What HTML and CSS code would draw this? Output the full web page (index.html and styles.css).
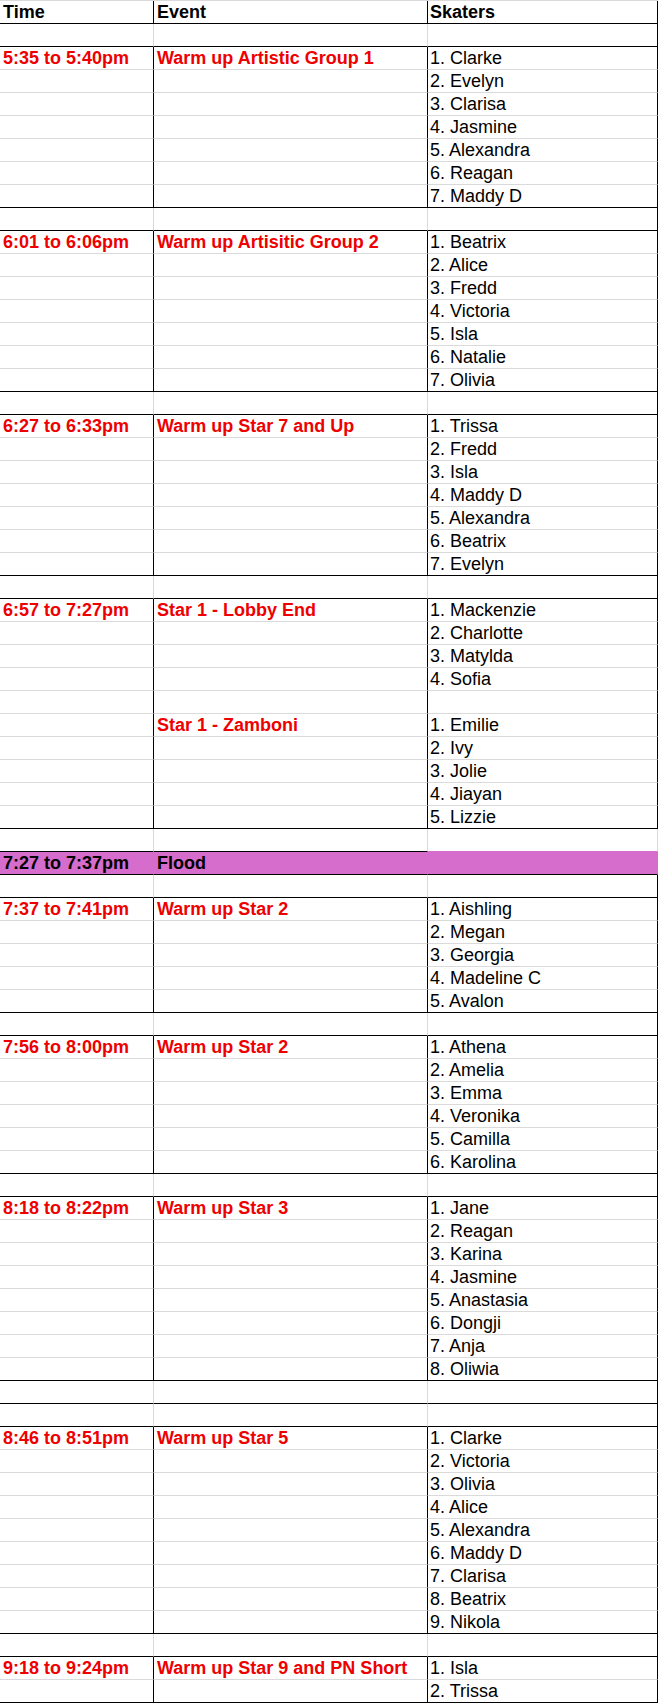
FILE: index.html
```html
<!DOCTYPE html>
<html>
<head>
<meta charset="utf-8">
<link rel="stylesheet" href="styles.css">
</head>
<body>
<div class="sheet">
  <div class="row hd"><div class="c">Time</div><div class="c">Event</div><div class="c">Skaters</div></div>
  <div class="row gap"><div class="c"></div><div class="c"></div><div class="c"></div></div>

  <div class="row grp"><div class="c t">5:35 to 5:40pm</div><div class="c e">Warm up Artistic Group 1</div><div class="c">1. Clarke</div></div>
  <div class="row grp"><div class="c"></div><div class="c"></div><div class="c">2. Evelyn</div></div>
  <div class="row grp"><div class="c"></div><div class="c"></div><div class="c">3. Clarisa</div></div>
  <div class="row grp"><div class="c"></div><div class="c"></div><div class="c">4. Jasmine</div></div>
  <div class="row grp"><div class="c"></div><div class="c"></div><div class="c">5. Alexandra</div></div>
  <div class="row grp"><div class="c"></div><div class="c"></div><div class="c">6. Reagan</div></div>
  <div class="row grp last"><div class="c"></div><div class="c"></div><div class="c">7. Maddy D</div></div>
  <div class="row gap"><div class="c"></div><div class="c"></div><div class="c"></div></div>

  <div class="row grp"><div class="c t">6:01 to 6:06pm</div><div class="c e">Warm up Artisitic Group 2</div><div class="c">1. Beatrix</div></div>
  <div class="row grp"><div class="c"></div><div class="c"></div><div class="c">2. Alice</div></div>
  <div class="row grp"><div class="c"></div><div class="c"></div><div class="c">3. Fredd</div></div>
  <div class="row grp"><div class="c"></div><div class="c"></div><div class="c">4. Victoria</div></div>
  <div class="row grp"><div class="c"></div><div class="c"></div><div class="c">5. Isla</div></div>
  <div class="row grp"><div class="c"></div><div class="c"></div><div class="c">6. Natalie</div></div>
  <div class="row grp last"><div class="c"></div><div class="c"></div><div class="c">7. Olivia</div></div>
  <div class="row gap"><div class="c"></div><div class="c"></div><div class="c"></div></div>

  <div class="row grp"><div class="c t">6:27 to 6:33pm</div><div class="c e">Warm up Star 7 and Up</div><div class="c">1. Trissa</div></div>
  <div class="row grp"><div class="c"></div><div class="c"></div><div class="c">2. Fredd</div></div>
  <div class="row grp"><div class="c"></div><div class="c"></div><div class="c">3. Isla</div></div>
  <div class="row grp"><div class="c"></div><div class="c"></div><div class="c">4. Maddy D</div></div>
  <div class="row grp"><div class="c"></div><div class="c"></div><div class="c">5. Alexandra</div></div>
  <div class="row grp"><div class="c"></div><div class="c"></div><div class="c">6. Beatrix</div></div>
  <div class="row grp last"><div class="c"></div><div class="c"></div><div class="c">7. Evelyn</div></div>
  <div class="row gap"><div class="c"></div><div class="c"></div><div class="c"></div></div>

  <div class="row grp"><div class="c t">6:57 to 7:27pm</div><div class="c e">Star 1 - Lobby End</div><div class="c">1. Mackenzie</div></div>
  <div class="row grp"><div class="c"></div><div class="c"></div><div class="c">2. Charlotte</div></div>
  <div class="row grp"><div class="c"></div><div class="c"></div><div class="c">3. Matylda</div></div>
  <div class="row grp"><div class="c"></div><div class="c"></div><div class="c">4. Sofia</div></div>
  <div class="row grp"><div class="c"></div><div class="c"></div><div class="c"></div></div>
  <div class="row grp"><div class="c"></div><div class="c e">Star 1 - Zamboni</div><div class="c">1. Emilie</div></div>
  <div class="row grp"><div class="c"></div><div class="c"></div><div class="c">2. Ivy</div></div>
  <div class="row grp"><div class="c"></div><div class="c"></div><div class="c">3. Jolie</div></div>
  <div class="row grp"><div class="c"></div><div class="c"></div><div class="c">4. Jiayan</div></div>
  <div class="row grp last"><div class="c"></div><div class="c"></div><div class="c">5. Lizzie</div></div>
  <div class="row gap pre-flood"><div class="c"></div><div class="c"></div><div class="c"></div></div>

  <div class="row flood"><div class="c">7:27 to 7:37pm</div><div class="c">Flood</div><div class="c"></div></div>
  <div class="row gap"><div class="c"></div><div class="c"></div><div class="c"></div></div>

  <div class="row grp"><div class="c t">7:37 to 7:41pm</div><div class="c e">Warm up Star 2</div><div class="c">1. Aishling</div></div>
  <div class="row grp"><div class="c"></div><div class="c"></div><div class="c">2. Megan</div></div>
  <div class="row grp"><div class="c"></div><div class="c"></div><div class="c">3. Georgia</div></div>
  <div class="row grp"><div class="c"></div><div class="c"></div><div class="c">4. Madeline C</div></div>
  <div class="row grp last"><div class="c"></div><div class="c"></div><div class="c">5. Avalon</div></div>
  <div class="row gap"><div class="c"></div><div class="c"></div><div class="c"></div></div>

  <div class="row grp"><div class="c t">7:56 to 8:00pm</div><div class="c e">Warm up Star 2</div><div class="c">1. Athena</div></div>
  <div class="row grp"><div class="c"></div><div class="c"></div><div class="c">2. Amelia</div></div>
  <div class="row grp"><div class="c"></div><div class="c"></div><div class="c">3. Emma</div></div>
  <div class="row grp"><div class="c"></div><div class="c"></div><div class="c">4. Veronika</div></div>
  <div class="row grp"><div class="c"></div><div class="c"></div><div class="c">5. Camilla</div></div>
  <div class="row grp last"><div class="c"></div><div class="c"></div><div class="c">6. Karolina</div></div>
  <div class="row gap"><div class="c"></div><div class="c"></div><div class="c"></div></div>

  <div class="row grp"><div class="c t">8:18 to 8:22pm</div><div class="c e">Warm up Star 3</div><div class="c">1. Jane</div></div>
  <div class="row grp"><div class="c"></div><div class="c"></div><div class="c">2. Reagan</div></div>
  <div class="row grp"><div class="c"></div><div class="c"></div><div class="c">3. Karina</div></div>
  <div class="row grp"><div class="c"></div><div class="c"></div><div class="c">4. Jasmine</div></div>
  <div class="row grp"><div class="c"></div><div class="c"></div><div class="c">5. Anastasia</div></div>
  <div class="row grp"><div class="c"></div><div class="c"></div><div class="c">6. Dongji</div></div>
  <div class="row grp"><div class="c"></div><div class="c"></div><div class="c">7. Anja</div></div>
  <div class="row grp last"><div class="c"></div><div class="c"></div><div class="c">8. Oliwia</div></div>
  <div class="row gap"><div class="c"></div><div class="c"></div><div class="c"></div></div>
  <div class="row gap"><div class="c"></div><div class="c"></div><div class="c"></div></div>

  <div class="row grp"><div class="c t">8:46 to 8:51pm</div><div class="c e">Warm up Star 5</div><div class="c">1. Clarke</div></div>
  <div class="row grp"><div class="c"></div><div class="c"></div><div class="c">2. Victoria</div></div>
  <div class="row grp"><div class="c"></div><div class="c"></div><div class="c">3. Olivia</div></div>
  <div class="row grp"><div class="c"></div><div class="c"></div><div class="c">4. Alice</div></div>
  <div class="row grp"><div class="c"></div><div class="c"></div><div class="c">5. Alexandra</div></div>
  <div class="row grp"><div class="c"></div><div class="c"></div><div class="c">6. Maddy D</div></div>
  <div class="row grp"><div class="c"></div><div class="c"></div><div class="c">7. Clarisa</div></div>
  <div class="row grp"><div class="c"></div><div class="c"></div><div class="c">8. Beatrix</div></div>
  <div class="row grp last"><div class="c"></div><div class="c"></div><div class="c">9. Nikola</div></div>
  <div class="row gap"><div class="c"></div><div class="c"></div><div class="c"></div></div>

  <div class="row grp"><div class="c t">9:18 to 9:24pm</div><div class="c e">Warm up Star 9 and PN Short</div><div class="c">1. Isla</div></div>
  <div class="row grp last"><div class="c"></div><div class="c"></div><div class="c">2. Trissa</div></div>
</div>
</body>
</html>
```

FILE: styles.css
```css
html, body {
  margin: 0;
  padding: 0;
  background: #ffffff;
}

body {
  font-family: "Liberation Sans", Arial, sans-serif;
  font-size: 18px;
  color: #000000;
}

.sheet {
  width: 658px;
  border-top: 1px solid #dadada;
}

.row {
  display: grid;
  grid-template-columns: 154px 274px 230px;
  height: 23px;
}

.c {
  box-sizing: border-box;
  height: 23px;
  border-right: 1px solid #000;
  border-bottom: 1px solid #dadada;
  padding: 0 3px;
  line-height: 23px;
  white-space: nowrap;
}

.c:nth-child(3) {
  padding-left: 2px;
}

/* header */
.hd .c {
  font-weight: bold;
  border-bottom-color: #000;
}

/* blank separator rows */
.gap .c {
  border-bottom-color: #000;
}
.gap .c:nth-child(1),
.gap .c:nth-child(2) {
  border-right-color: #dadada;
}
.pre-flood .c:nth-child(3) {
  border-bottom-color: #d66ccc;
  border-right-color: #dadada;
}

/* group rows */
.grp.last .c {
  border-bottom-color: #000;
}

.t, .e {
  color: #ee0000;
  font-weight: bold;
}

/* flood row */
.flood .c {
  background: #d66ccc;
  border-right-color: #d66ccc;
  border-bottom-color: #000;
  font-weight: bold;
}
```
